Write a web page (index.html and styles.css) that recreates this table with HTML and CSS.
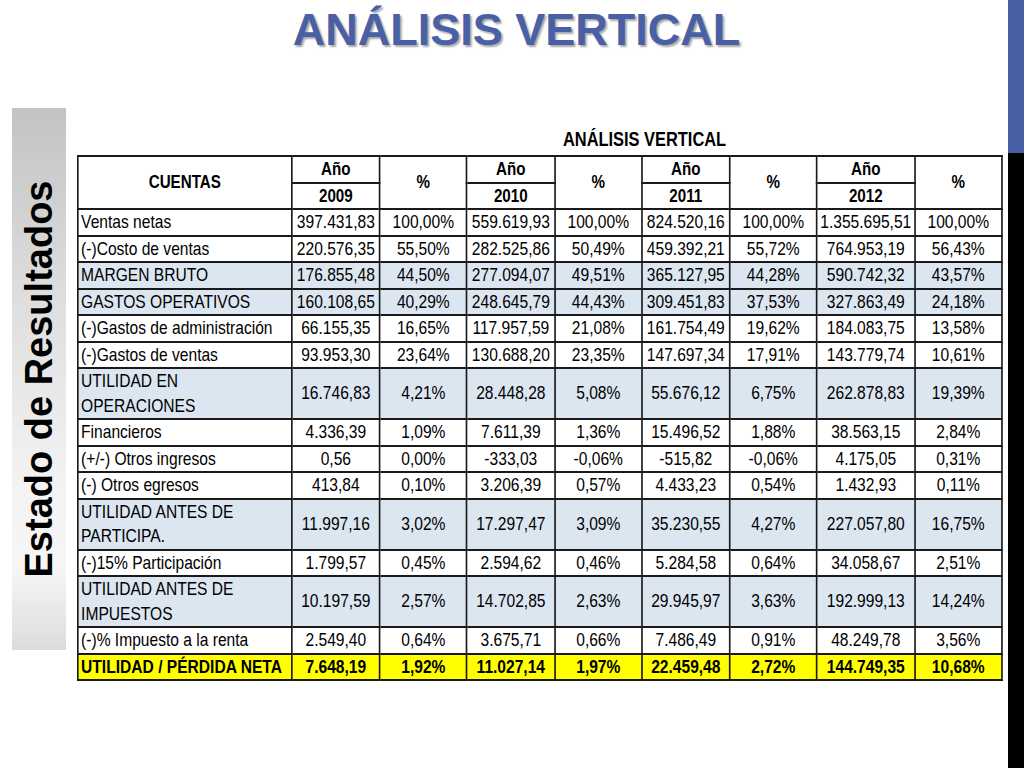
FILE: index.html
```html
<!DOCTYPE html>
<html lang="es">
<head>
<meta charset="utf-8">
<title>Análisis Vertical</title>
<link rel="stylesheet" href="styles.css">
</head>
<body>
<div class="page">
  <div class="content">
    <h1 class="title">ANÁLISIS VERTICAL</h1>
    <div class="main">
      <div class="sidebar"><span class="side-text">Estado de Resultados</span></div>
      <div class="table-area">
        <div class="narrow">
          <div class="caption">ANÁLISIS VERTICAL</div>
          <table class="av">
            <colgroup>
              <col class="c-label"><col class="c-n"><col class="c-p"><col class="c-n"><col class="c-p"><col class="c-n"><col class="c-p"><col class="c-w"><col class="c-p">
            </colgroup>
            <thead>
              <tr>
                <th rowspan="2" class="h-cuentas">CUENTAS</th>
                <th>Año</th><th rowspan="2">%</th>
                <th>Año</th><th rowspan="2">%</th>
                <th>Año</th><th rowspan="2">%</th>
                <th>Año</th><th rowspan="2">%</th>
              </tr>
              <tr><th>2009</th><th>2010</th><th>2011</th><th>2012</th></tr>
            </thead>
            <tbody>
              <tr><td class="lbl">Ventas netas</td><td>397.431,83</td><td>100,00%</td><td>559.619,93</td><td>100,00%</td><td>824.520,16</td><td>100,00%</td><td>1.355.695,51</td><td>100,00%</td></tr>
              <tr><td class="lbl">(-)Costo de ventas</td><td>220.576,35</td><td>55,50%</td><td>282.525,86</td><td>50,49%</td><td>459.392,21</td><td>55,72%</td><td>764.953,19</td><td>56,43%</td></tr>
              <tr class="hl"><td class="lbl">MARGEN BRUTO</td><td>176.855,48</td><td>44,50%</td><td>277.094,07</td><td>49,51%</td><td>365.127,95</td><td>44,28%</td><td>590.742,32</td><td>43,57%</td></tr>
              <tr class="hl"><td class="lbl">GASTOS OPERATIVOS</td><td>160.108,65</td><td>40,29%</td><td>248.645,79</td><td>44,43%</td><td>309.451,83</td><td>37,53%</td><td>327.863,49</td><td>24,18%</td></tr>
              <tr><td class="lbl">(-)Gastos de administración</td><td>66.155,35</td><td>16,65%</td><td>117.957,59</td><td>21,08%</td><td>161.754,49</td><td>19,62%</td><td>184.083,75</td><td>13,58%</td></tr>
              <tr><td class="lbl">(-)Gastos de ventas</td><td>93.953,30</td><td>23,64%</td><td>130.688,20</td><td>23,35%</td><td>147.697,34</td><td>17,91%</td><td>143.779,74</td><td>10,61%</td></tr>
              <tr class="hl"><td class="lbl">UTILIDAD EN<br>OPERACIONES</td><td>16.746,83</td><td>4,21%</td><td>28.448,28</td><td>5,08%</td><td>55.676,12</td><td>6,75%</td><td>262.878,83</td><td>19,39%</td></tr>
              <tr><td class="lbl">Financieros</td><td>4.336,39</td><td>1,09%</td><td>7.611,39</td><td>1,36%</td><td>15.496,52</td><td>1,88%</td><td>38.563,15</td><td>2,84%</td></tr>
              <tr><td class="lbl">(+/-) Otros ingresos</td><td>0,56</td><td>0,00%</td><td>-333,03</td><td>-0,06%</td><td>-515,82</td><td>-0,06%</td><td>4.175,05</td><td>0,31%</td></tr>
              <tr><td class="lbl">(-) Otros egresos</td><td>413,84</td><td>0,10%</td><td>3.206,39</td><td>0,57%</td><td>4.433,23</td><td>0,54%</td><td>1.432,93</td><td>0,11%</td></tr>
              <tr class="hl"><td class="lbl">UTILIDAD ANTES DE<br>PARTICIPA.</td><td>11.997,16</td><td>3,02%</td><td>17.297,47</td><td>3,09%</td><td>35.230,55</td><td>4,27%</td><td>227.057,80</td><td>16,75%</td></tr>
              <tr><td class="lbl">(-)15% Participación</td><td>1.799,57</td><td>0,45%</td><td>2.594,62</td><td>0,46%</td><td>5.284,58</td><td>0,64%</td><td>34.058,67</td><td>2,51%</td></tr>
              <tr class="hl"><td class="lbl">UTILIDAD ANTES DE<br>IMPUESTOS</td><td>10.197,59</td><td>2,57%</td><td>14.702,85</td><td>2,63%</td><td>29.945,97</td><td>3,63%</td><td>192.999,13</td><td>14,24%</td></tr>
              <tr><td class="lbl">(-)% Impuesto a la renta</td><td>2.549,40</td><td>0,64%</td><td>3.675,71</td><td>0,66%</td><td>7.486,49</td><td>0,91%</td><td>48.249,78</td><td>3,56%</td></tr>
              <tr class="total"><td class="lbl">UTILIDAD / PÉRDIDA NETA</td><td>7.648,19</td><td>1,92%</td><td>11.027,14</td><td>1,97%</td><td>22.459,48</td><td>2,72%</td><td>144.749,35</td><td>10,68%</td></tr>
            </tbody>
          </table>
        </div>
      </div>
    </div>
  </div>
  <div class="rightbar">
    <div class="rb-blue"></div>
    <div class="rb-black"></div>
  </div>
</div>
</body>
</html>
```

FILE: styles.css
```css
* { box-sizing: border-box; }
html, body { margin: 0; padding: 0; background: #ffffff; }
body { font-family: "Liberation Sans", Arial, sans-serif; }

.page {
  width: 1024px;
  height: 768px;
  display: flex;
  overflow: hidden;
}

.content {
  flex: 1;
  min-width: 0;
  display: flex;
  flex-direction: column;
}

.title {
  margin: 0;
  padding: 4px 0 0 25px;
  text-align: center;
  font-family: "Liberation Sans", Arial, sans-serif;
  font-weight: bold;
  font-size: 45px;
  line-height: 52px;
  color: #4960a6;
  text-shadow: 2px 2px 2px rgba(0, 0, 0, 0.35);
}

.main {
  margin-top: 52px;
  display: flex;
  align-items: flex-start;
}

.sidebar {
  margin-left: 12px;
  width: 54px;
  height: 542px;
  flex: none;
  background: linear-gradient(to bottom, #c3c3c3 0%, #dedede 35%, #f3f3f3 70%, #f6f6f6 85%, #dcdcdc 100%);
  display: flex;
  align-items: center;
  justify-content: center;
}

.side-text {
  display: block;
  transform: rotate(-90deg);
  white-space: nowrap;
  font-family: "Liberation Sans", Arial, sans-serif;
  font-weight: bold;
  font-size: 38px;
  line-height: 40px;
  color: #000000;
}

.table-area {
  margin-left: 11px;
  margin-top: 20px;
  width: 924px;
  flex: none;
}

/* Arial Narrow look: regular Liberation Sans squeezed horizontally */
.narrow {
  width: 1126.83px;
  transform: scaleX(0.82);
  transform-origin: 0 0;
}

.caption {
  padding-left: 592.7px;
  font-family: "Liberation Sans", Arial, sans-serif;
  font-weight: bold;
  font-size: 20px;
  line-height: 23px;
  height: 27px;
  color: #000000;
}

.av {
  border-collapse: collapse;
  table-layout: fixed;
  width: 1126.83px;
  font-family: "Liberation Sans", Arial, sans-serif;
  font-size: 19px;
  line-height: 24.5px;
  color: #000000;
  border: 2px solid #111111;
}

.c-label { width: 260.98px; }
.c-n { width: 107.32px; }
.c-p { width: 106.1px; }
.c-w { width: 119.51px; }

.av th, .av td {
  border: 2px solid #1a1a1a;
  padding: 0;
  text-align: center;
  vertical-align: middle;
  white-space: nowrap;
}

.av th {
  font-weight: bold;
  font-size: 18.5px;
}

.av td.lbl {
  text-align: left;
  padding-left: 3px;
}

.av tr.hl td { background: #dce6f1; }

.av tr.total td {
  background: #ffff00;
  font-weight: bold;
}

.rightbar {
  width: 16px;
  flex: none;
  display: flex;
  flex-direction: column;
}

.rb-blue { height: 153px; background: #4960a6; }
.rb-black { flex: 1; background: #000000; }
```
